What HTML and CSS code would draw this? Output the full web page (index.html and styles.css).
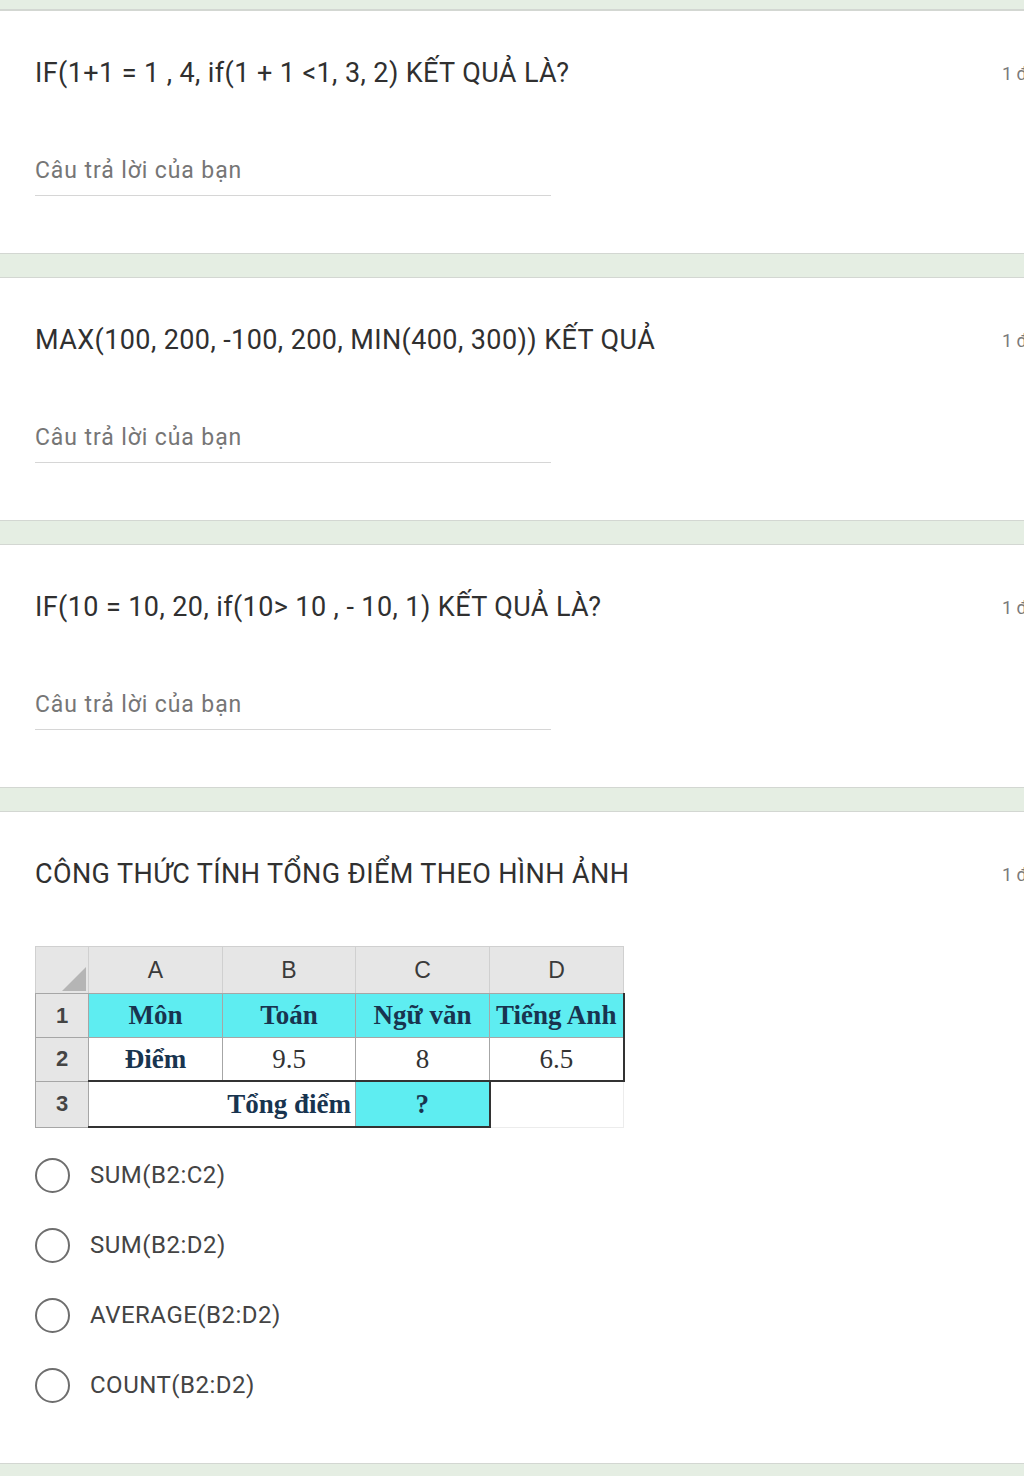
FILE: index.html
```html
<!DOCTYPE html>
<html lang="vi">
<head>
    <meta charset="UTF-8">
    <meta name="viewport" content="width=device-width, initial-scale=1.0">
    <title>Bài kiểm tra Excel</title>
    <link rel="stylesheet" href="styles.css">
</head>
<body>
    <div class="band band-top"></div>

    <div class="card">
        <div class="q-head">
            <div class="q-title">IF(1+1 = 1 , 4, if(1 + 1 &lt;1, 3, 2) KẾT QUẢ LÀ?</div>
            <div class="points">1 điểm</div>
        </div>
        <div class="answer">Câu trả lời của bạn</div>
    </div>

    <div class="card">
        <div class="q-head">
            <div class="q-title">MAX(100, 200, -100, 200, MIN(400, 300)) KẾT QUẢ</div>
            <div class="points">1 điểm</div>
        </div>
        <div class="answer">Câu trả lời của bạn</div>
    </div>

    <div class="card">
        <div class="q-head">
            <div class="q-title">IF(10 = 10, 20, if(10&gt; 10 , - 10, 1) KẾT QUẢ LÀ?</div>
            <div class="points">1 điểm</div>
        </div>
        <div class="answer">Câu trả lời của bạn</div>
    </div>

    <div class="card card-choice">
        <div class="q-head">
            <div class="q-title">CÔNG THỨC TÍNH TỔNG ĐIỂM THEO HÌNH ẢNH</div>
            <div class="points">1 điểm</div>
        </div>

        <table class="sheet">
            <tr class="col-head">
                <th class="corner">
                    <svg width="30" height="30" viewBox="0 0 30 30"><polygon points="28,4 28,28 4,28" fill="#b5b5b5"/></svg>
                </th>
                <th>A</th>
                <th>B</th>
                <th>C</th>
                <th>D</th>
            </tr>
            <tr class="row-1">
                <th class="row-num">1</th>
                <td class="bold">Môn</td>
                <td class="bold">Toán</td>
                <td class="bold">Ngữ văn</td>
                <td class="bold edge-r">Tiếng Anh</td>
            </tr>
            <tr class="row-2">
                <th class="row-num">2</th>
                <td class="bold">Điểm</td>
                <td>9.5</td>
                <td>8</td>
                <td class="edge-r">6.5</td>
            </tr>
            <tr class="row-3">
                <th class="row-num">3</th>
                <td class="bold total" colspan="2">Tổng điểm</td>
                <td class="bold ask">?</td>
                <td class="empty"></td>
            </tr>
        </table>

        <div class="options">
            <label class="option"><span class="radio"></span>SUM(B2:C2)</label>
            <label class="option"><span class="radio"></span>SUM(B2:D2)</label>
            <label class="option"><span class="radio"></span>AVERAGE(B2:D2)</label>
            <label class="option"><span class="radio"></span>COUNT(B2:D2)</label>
        </div>
    </div>

    <div class="band band-bottom"></div>
</body>
</html>
```

FILE: styles.css
```css
html, body {
    overflow-x: hidden;
}

body {
    margin: 0;
    background-color: #e5eee3;
    font-family: Roboto, "Noto Sans", Arial, sans-serif;
    color: #2b2b2b;
}

.band-top {
    height: 9px;
    border-bottom: 1px solid #d3d7d2;
}

.band-bottom {
    height: 14px;
}

.card {
    background-color: white;
    border-bottom: 1px solid #d3d7d2;
    margin-bottom: 23px;
    padding: 45px 0 57px 35px;
}

.card + .card,
.band-top + .card {
    border-top: 1px solid #d3d7d2;
}

.card-choice {
    margin-bottom: 0;
    padding-bottom: 43px;
}

.q-head {
    display: flex;
    align-items: center;
}

.q-title {
    flex: 1;
    font-size: 27px;
    line-height: 34px;
    letter-spacing: 0.4px;
    color: #303030;
}

/* the points label runs past the right edge, as in the screenshot */
.points {
    flex: none;
    width: 22px;
    white-space: nowrap;
    font-size: 18px;
    color: #7a7a7a;
}

.answer {
    width: 516px;
    margin-top: 66px;
    padding-bottom: 9px;
    border-bottom: 1px solid #d6d6d6;
    font-size: 23px;
    line-height: 30px;
    letter-spacing: 0.9px;
    color: #767676;
}

/* spreadsheet picture */
.sheet {
    margin-top: 55px;
    border-collapse: collapse;
    font-family: "Liberation Serif", "Times New Roman", serif;
    font-size: 27px;
    color: #333;
}

.sheet th,
.sheet td {
    border: 1px solid #a6a6a6;
    padding: 0;
    text-align: center;
    white-space: nowrap;
}

.col-head th {
    height: 46px;
    background-color: #e6e6e6;
    border-color: #d0d0d0;
    border-bottom-color: #a6a6a6;
    font-family: "Liberation Sans", Arial, sans-serif;
    font-weight: normal;
    font-size: 23px;
    color: #3a3a3a;
}

.col-head th:nth-child(2),
.col-head th:nth-child(4),
.col-head th:nth-child(5) {
    width: 133px;
}

.col-head th:nth-child(3) {
    width: 132px;
}

.col-head .corner {
    width: 52px;
    vertical-align: bottom;
    text-align: right;
    line-height: 0;
}

.row-num {
    background-color: #e6e6e6;
    border-color: #d0d0d0;
    font-family: "Liberation Sans", Arial, sans-serif;
    font-size: 22px;
    color: #444;
}

.row-1 td {
    height: 43px;
    background-color: #5eedf1;
    color: #18344f;
}

.row-2 td {
    height: 42px;
    border-bottom: 2px solid #333;
}

.row-3 td {
    height: 44px;
}

.row-3 .total,
.row-3 .ask {
    border-bottom: 2px solid #333;
}

.bold {
    font-weight: bold;
    color: #18344f;
}

.edge-r {
    border-right: 2px solid #333 !important;
}

.total {
    text-align: right !important;
    padding-right: 4px !important;
}

.ask {
    background-color: #5eedf1;
    border-right: 2px solid #333 !important;
}

.empty {
    border-color: #ececec !important;
}

.options {
    margin-top: 12px;
}

.option {
    display: flex;
    align-items: center;
    height: 70px;
    font-size: 24px;
    letter-spacing: 0.5px;
    color: #444;
}

.radio {
    width: 31px;
    height: 31px;
    border: 2px solid #6e6e6e;
    border-radius: 50%;
    margin-right: 20px;
}
```
